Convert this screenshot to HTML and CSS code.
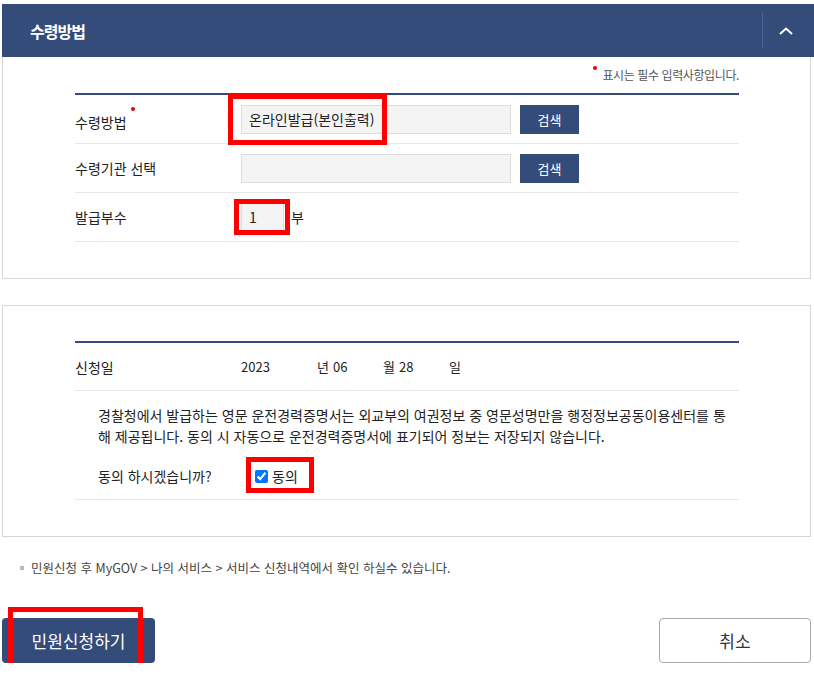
FILE: index.html
```html
<!DOCTYPE html>
<html lang="ko">
<head>
    <meta charset="UTF-8">
    <meta name="viewport" content="width=device-width, initial-scale=1.0">
    <title>수령방법</title>
    <link rel="stylesheet" href="styles.css">
</head>
<body>

    <div class="box-head">
        <h2>수령방법</h2>
        <button class="fold" type="button" aria-label="접기">
            <svg width="14" height="8" viewBox="0 0 14 8"><path d="M1 7 L7 1.5 L13 7" fill="none" stroke="#fff" stroke-width="2"/></svg>
        </button>
    </div>

    <!-- 수령방법 -->
    <div class="box box-first">
        <p class="req-info"><span class="dot dot-info"></span>표시는 필수 입력사항입니다.</p>
        <div class="form-table">
            <div class="form-row">
                <div class="form-label">수령방법<span class="dot dot-label"></span></div>
                <div class="form-field">
                    <input class="inp inp-wide" type="text" value="온라인발급(본인출력)" readonly>
                    <button class="btn-search" type="button">검색</button>
                </div>
            </div>
            <div class="form-row">
                <div class="form-label">수령기관 선택</div>
                <div class="form-field">
                    <input class="inp inp-wide" type="text" value="" readonly>
                    <button class="btn-search" type="button">검색</button>
                </div>
            </div>
            <div class="form-row">
                <div class="form-label">발급부수</div>
                <div class="form-field">
                    <input class="inp inp-count" type="text" value="1">
                    <span class="unit">부</span>
                </div>
            </div>
        </div>
    </div>

    <!-- 신청일 / 동의 -->
    <div class="box box-second">
        <div class="form-table">
            <div class="form-row date-row">
                <div class="form-label">신청일</div>
                <div class="form-field">
                    <span class="date-num date-year">2023</span><span class="date-unit">년</span><span class="date-num">06</span><span class="date-unit">월</span><span class="date-num">28</span><span class="date-unit">일</span>
                </div>
            </div>
            <div class="agree">
                <p>경찰청에서 발급하는 영문 운전경력증명서는 외교부의 여권정보 중 영문성명만을 행정정보공동이용센터를 통해 제공됩니다. 동의 시 자동으로 운전경력증명서에 표기되어 정보는 저장되지 않습니다.</p>
                <div class="agree-row">
                    <span class="agree-q">동의 하시겠습니까?</span>
                    <label class="agree-check"><input type="checkbox" checked> 동의</label>
                </div>
            </div>
        </div>
    </div>

    <p class="notice"><span class="bullet"></span>민원신청 후 MyGOV &gt; 나의 서비스 &gt; 서비스 신청내역에서 확인 하실수 있습니다.</p>

    <div class="btn-row">
        <button class="btn-apply" type="button">민원신청하기</button>
        <button class="btn-cancel" type="button">취소</button>
    </div>

    <!-- 빨간 표시 -->
    <div class="mark mark-1"></div>
    <div class="mark mark-2"></div>
    <div class="mark mark-3"></div>
    <div class="mark mark-4"></div>

</body>
</html>
```

FILE: styles.css
```css
body {
    margin: 0;
    padding: 4px 0 0 2px;
    font-family: "Noto Sans CJK KR", "Noto Sans", sans-serif;
    color: #222;
    background-color: #fff;
    position: relative;
}

/* 상단 타이틀 바 */
.box-head {
    display: flex;
    align-items: center;
    justify-content: space-between;
    width: 812px;
    height: 53px;
    background-color: #344c7a;
}

.box-head h2 {
    margin: 0 0 0 28px;
    font-size: 16px;
    font-weight: bold;
    letter-spacing: -1px;
    color: #fff;
}

.fold {
    display: flex;
    align-items: center;
    justify-content: center;
    width: 52px;
    height: 35px;
    padding: 0 5px 0 0;
    border: none;
    border-left: 1px solid #4d6391;
    background: none;
}

/* 박스 */
.box {
    width: 809px;
    box-sizing: border-box;
    border: 1px solid #d7d7d7;
    padding: 0 71px 36px 72px;
}

.box-first {
    border-top: none;
}

.box-second {
    margin-top: 26px;
    padding-top: 35px;
}

.req-info {
    margin: 0 0 9px;
    padding-top: 9px;
    text-align: right;
    font-size: 12px;
    letter-spacing: -0.4px;
    line-height: 18px;
    color: #555;
}

.dot {
    display: inline-block;
    width: 4px;
    height: 4px;
    border-radius: 50%;
    background-color: #e60012;
}

.dot-info {
    margin-right: 5px;
    vertical-align: 10px;
}

.dot-label {
    margin-left: 4px;
    vertical-align: 17px;
}

.form-table {
    border-top: 2px solid #344c7a;
}

.form-row {
    display: flex;
    align-items: center;
    height: 48px;
    border-bottom: 1px solid #e6e6e6;
}

.form-label {
    width: 166px;
    flex-shrink: 0;
    font-size: 14px;
}

.form-field {
    display: flex;
    align-items: center;
}

.inp {
    height: 29px;
    box-sizing: border-box;
    border: 1px solid #dcdcdc;
    background-color: #f4f4f4;
    padding: 0 7px;
    font-family: inherit;
    font-size: 14px;
    color: #222;
}

.inp-wide {
    width: 270px;
}

.inp-count {
    width: 43px;
}

.btn-search {
    margin-left: 9px;
    width: 59px;
    height: 29px;
    border: none;
    background-color: #344c7a;
    color: #fff;
    font-family: inherit;
    font-size: 13px;
}

.unit {
    margin-left: 7px;
    font-size: 14px;
}

/* 신청일 */
.date-row {
    height: 47px;
}

.date-num,
.date-unit {
    display: inline-block;
    font-size: 13px;
}

.date-num {
    width: 50px;
}

.date-year {
    width: 76px;
}

.date-unit {
    width: 16px;
}

/* 동의 */
.agree {
    padding: 14px 0 8px 23px;
    border-bottom: 1px solid #e6e6e6;
}

.agree p {
    margin: 0;
    padding-right: 10px;
    font-size: 14px;
    line-height: 21px;
}

.agree-row {
    display: flex;
    align-items: center;
    height: 30px;
    margin-top: 14px;
    font-size: 14px;
}

.agree-q {
    width: 157px;
}

.agree-check {
    display: flex;
    align-items: center;
}

.agree-check input {
    width: 13px;
    height: 13px;
    margin: 0 4px 0 0;
}

/* 안내 */
.notice {
    display: flex;
    align-items: center;
    margin: 22px 0 0;
    padding-left: 18px;
    font-size: 12.5px;
    line-height: 18px;
    color: #444;
}

.bullet {
    width: 4px;
    height: 4px;
    margin-right: 7px;
    background-color: #bbb;
}

/* 하단 버튼 */
.btn-row {
    display: flex;
    justify-content: space-between;
    width: 809px;
    margin-top: 41px;
}

.btn-apply {
    width: 153px;
    height: 45px;
    border: none;
    border-radius: 4px;
    background-color: #344c7a;
    color: #fff;
    font-family: inherit;
    font-size: 17px;
}

.btn-cancel {
    width: 152px;
    height: 45px;
    border: 1px solid #aaa;
    border-radius: 4px;
    background-color: #fff;
    color: #333;
    font-family: inherit;
    font-size: 17px;
}

/* 빨간 박스 표시 */
.mark {
    position: absolute;
    box-sizing: border-box;
    border: 5px solid #f00;
    pointer-events: none;
}

.mark-1 {
    left: 228px;
    top: 94px;
    width: 159px;
    height: 51px;
}

.mark-2 {
    left: 234px;
    top: 199px;
    width: 56px;
    height: 36px;
}

.mark-3 {
    left: 246px;
    top: 457px;
    width: 68px;
    height: 36px;
}

.mark-4 {
    left: 8px;
    top: 607px;
    width: 135px;
    height: 69px;
}
```
